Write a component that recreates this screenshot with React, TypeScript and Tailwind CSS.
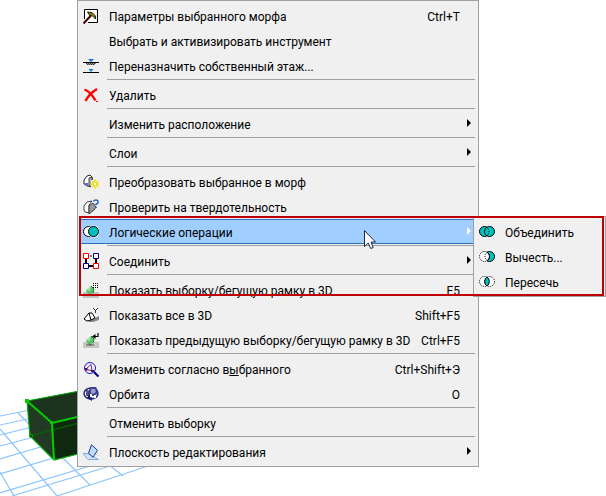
import type { ReactNode } from 'react'
import { clsx } from 'clsx'

interface Item {
  label: ReactNode
  icon?: ReactNode
  shortcut?: string
  active?: boolean
  submenu?: boolean
}

function Glyph({ children }: { children: ReactNode }) {
  return (
    <svg viewBox="0 0 16 16" className="h-4 w-4" fill="none" aria-hidden="true">
      {children}
    </svg>
  )
}

// ── Icons ───────────────────────────────────────────────────
const SettingsIcon = (
  <Glyph>
    <path d="M1.500 11V1.500h13v13H5" fill="#fff" stroke="#000" />
    <path d="M4.500 4l4.500.5L12.500 8v3L9 7.500 7 8z" fill="#808000" stroke="#000" strokeWidth=".8" />
    <path d="M.5 15.500L8 7.500" stroke="#400000" strokeWidth="2" />
  </Glyph>
)

const StoryIcon = (
  <Glyph>
    <path d="M0 4.500h16M0 14.500h16" stroke="#000" />
    <path d="M3 5h10v1H3zM4 6h8v1H4z" fill="#909090" />
    <path d="M3 5.500h10M4 6.500h8" stroke="#444" strokeDasharray="1 1" />
    <path d="M5 1h6L8 4zM5.500 11h5L8 14z" fill="#1478e0" />
  </Glyph>
)

const DeleteIcon = (
  <Glyph>
    <path d="M1.500 2.500C5 4 10 9 12.500 13.500M14 2C9 5 5 9 2.500 14" stroke="#f00" strokeWidth="2.400" />
    <path d="M13 14.500h2" stroke="#f00" />
  </Glyph>
)

const ConvertIcon = (
  <Glyph>
    <path d="M1 6l3-4 3-1 2 2v10l-4-1-4-2z" fill="#fff" stroke="#222" />
    <path d="M6 4l3-1v10l-3-1z" fill="#b0b0b0" stroke="#222" strokeWidth=".8" />
    <path d="M1.500 9H5v4l-3.500-2z" fill="#6a6ab8" />
    <path d="M8 6h8v8H8z" fill="#f0f0f0" />
    <path d="M12 5v10M7.500 10H16M9 7l6 6M15 7l-6 6" stroke="#f0dc00" strokeWidth="1.300" />
    <path d="M11 9h2v2h-2z" fill="#fff" />
  </Glyph>
)

const CheckIcon = (
  <Glyph>
    <path d="M1 7l3-4 5-1-3 4v8l-4-1-1-2z" fill="#fff" stroke="#333" strokeWidth=".9" />
    <path d="M6 7l4-3 3 4-2 3-5 4z" fill="#989898" stroke="#333" strokeWidth=".9" />
    <path d="M10.500 2.500Q11 1 13 1t2 2-2 2.200V6M13 7.500V9" stroke="#2464c8" strokeWidth="1.500" />
  </Glyph>
)

const BooleanIcon = (
  <Glyph>
    <circle cx="5.500" cy="7.500" r="5" fill="#fff" stroke="#000" />
    <circle cx="10.500" cy="7.500" r="6" fill="#fff" />
    <circle cx="10.500" cy="7.500" r="5" fill="#00c0c0" stroke="#000" />
  </Glyph>
)

const ConnectIcon = (
  <Glyph>
    <path d="M3 3h10v10H3z" stroke="#000" strokeWidth="2" />
    <path d="M5.500 3h5" stroke="#f0f0f0" strokeWidth="2" strokeDasharray="2 1" />
    <path d="M.5.5h5v5h-5zM10.500 10.500h5v5h-5z" fill="#fff" stroke="#f00" />
    <path d="M10.500.5h5v5h-5zM.5 10.500h5v5h-5z" fill="#fff" stroke="#000080" />
  </Glyph>
)

const GreenSolid = (
  <>
    <path d="M3 8l5-4 3 3-1 4-4 2-2-2z" fill="#5cc26a" />
    <path d="M3 8l5-4-1 5z" fill="#a4e6a8" />
    <path d="M8 4l3 3-1 4" stroke="#267a34" />
    <path d="M6 12l2 1" stroke="#1c5c24" />
  </>
)

const ShowSelectionIcon = (
  <Glyph>
    <path d="M0 10h16v6H0z" fill="#c2c2c0" />
    <path d="M3 12h8v2H3z" fill="#8c8c8c" />
    {GreenSolid}
    <path d="M10 1.500h6M10 3.500h6M10 5.500h6" stroke="#000" strokeDasharray="1 1" />
  </Glyph>
)

const ShowAllIcon = (
  <Glyph>
    <path d="M10 12l6-3v4l-6 2H5z" fill="#888" />
    <path d="M1 12l5-6 2 7-4 1zM6 6h3l3 5-4 2" fill="#fff" stroke="#000" />
    <path d="M10 1l2.500 2.500L15 1M12.500 3v3" stroke="#333" />
  </Glyph>
)

const ShowPreviousIcon = (
  <Glyph>
    <path d="M0 10h16v6H0z" fill="#c8c8c0" />
    <path d="M3 12h8v2H3z" fill="#8c8c8c" />
    {GreenSolid}
    <path d="M15 1v3.500h-4" stroke="#000" strokeWidth="1.200" />
    <path d="M9 4.500L12.500 2v5z" fill="#000" />
  </Glyph>
)

const ZoomIcon = (
  <Glyph>
    <circle cx="7" cy="7" r="5.500" fill="#f4f4ff" stroke="#1414d0" />
    <path d="M2.500 8.500L8 3.500l1 6z" stroke="#702080" />
    <path d="M2 7h2.500v2.500H2zM8 9h3v2H8z" fill="#501058" />
    <path d="M11 11l4.500 4.500" stroke="#000080" strokeWidth="2.200" />
  </Glyph>
)

const OrbitIcon = (
  <Glyph>
    <ellipse cx="8" cy="7.500" rx="7" ry="5.500" fill="#fff" stroke="#202074" strokeWidth="1.400" />
    <path d="M5 5l3-4h5l2 4-2 5H8L5 9z" fill="#40408c" />
    <path d="M8 3h4l1 3-3 2-2-1z" fill="#9c9ccc" />
    <path d="M4 4v5l3 2v2M7 9l-2 3" stroke="#101054" strokeWidth="1.400" />
    <path d="M7 8h2v3H7zM11 9h2v3h-2z" fill="#fff" />
    <path d="M5 12.500l4-1.500v4z" fill="#202074" />
  </Glyph>
)

const PlaneIcon = (
  <Glyph>
    <path d="M0 9.500h5l10.500 6H5z" fill="#cfe4fc" stroke="#80ace4" />
    <path d="M8.500.8l6 5.500-4.500 7-4.500-4z" fill="#c0dcfc" stroke="#1c3c84" />
  </Glyph>
)

// ── Boolean operation icons: overlapping circles ────────────
const UnionIcon = (
  <Glyph>
    <circle cx="5.500" cy="7.500" r="5" fill="#00c4c0" stroke="#000" />
    <circle cx="10.500" cy="7.500" r="5" fill="#00c4c0" stroke="#000" />
    <path d="M8 3.500a5 5 0 0 1 0 8" stroke="#000" strokeDasharray="1 1" />
  </Glyph>
)

const SubtractIcon = (
  <Glyph>
    <circle cx="10.500" cy="7.500" r="5" fill="#00c4c0" stroke="#000" />
    <path d="M8 3a5.500 5.500 0 0 1 0 9 5.500 5.500 0 0 1 0-9z" fill="#fff" stroke="#000" />
    <circle cx="5.500" cy="7.500" r="5" fill="#fff" stroke="#000" strokeDasharray="1 1" />
    <path d="M8 3.200a5 5 0 0 1 0 8.600" stroke="#000" />
    <path d="M8 3.500a5 5 0 0 0 0 8" stroke="#000" strokeDasharray="1 1" />
  </Glyph>
)

const IntersectIcon = (
  <Glyph>
    <circle cx="5.500" cy="7.500" r="5" fill="#fff" stroke="#000" strokeDasharray="1 1" />
    <circle cx="10.500" cy="7.500" r="5" fill="#fff" stroke="#000" strokeDasharray="1 1" />
    <path d="M8 3a5.500 5.500 0 0 1 0 9 5.500 5.500 0 0 1 0-9z" fill="#00c4c0" stroke="#000" />
  </Glyph>
)

// Groups are divided by a rule
const GROUPS: Item[][] = [
  [
    { label: 'Параметры выбранного морфа', icon: SettingsIcon, shortcut: 'Ctrl+T' },
    { label: 'Выбрать и активизировать инструмент' },
    { label: 'Переназначить собственный этаж...', icon: StoryIcon },
  ],
  [{ label: 'Удалить', icon: DeleteIcon }],
  [{ label: 'Изменить расположение', submenu: true }],
  [{ label: 'Слои', submenu: true }],
  [
    { label: 'Преобразовать выбранное в морф', icon: ConvertIcon },
    { label: 'Проверить на твердотельность', icon: CheckIcon },
    { label: 'Логические операции', icon: BooleanIcon, submenu: true, active: true },
  ],
  [{ label: 'Соединить', icon: ConnectIcon, submenu: true }],
  [
    { label: 'Показать выборку/бегущую рамку в 3D', icon: ShowSelectionIcon, shortcut: 'F5' },
    { label: 'Показать все в 3D', icon: ShowAllIcon, shortcut: 'Shift+F5' },
    { label: 'Показать предыдущую выборку/бегущую рамку в 3D', icon: ShowPreviousIcon, shortcut: 'Ctrl+F5' },
  ],
  [
    { label: <>Изменить согласно в<u>ы</u>бранного</>, icon: ZoomIcon, shortcut: 'Ctrl+Shift+Э' },
    { label: 'Орбита', icon: OrbitIcon, shortcut: 'O' },
  ],
  [{ label: 'Отменить выборку' }],
  [{ label: 'Плоскость редактирования', icon: PlaneIcon, submenu: true }],
]

const BOOLEAN_ITEMS: Item[] = [
  { label: 'Объединить', icon: UnionIcon },
  { label: 'Вычесть...', icon: SubtractIcon },
  { label: 'Пересечь', icon: IntersectIcon },
]

function MenuRow({ item }: { item: Item }) {
  return (
    <button
      type="button"
      role="menuitem"
      aria-haspopup={item.submenu ? 'menu' : undefined}
      className={clsx(
        'flex h-[25px] w-full items-center border-y pl-1 text-left whitespace-nowrap',
        item.active ? 'border-[#2a6fb8] bg-[#a0cfff]' : 'border-transparent'
      )}
    >
      <span className="w-[26px] shrink-0">{item.icon}</span>
      <span className="flex-1 pt-0.5">{item.label}</span>
      {item.shortcut && <span className="pt-0.5 pr-[18px]">{item.shortcut}</span>}
      {item.submenu && (
        <svg viewBox="0 0 4 8" className={clsx('mr-[7px] mb-0.5 h-2 w-1', item.active ? 'fill-white' : 'fill-black')} aria-hidden="true">
          <path d="M0 0l4 4-4 4z" />
        </svg>
      )}
    </button>
  )
}

function BooleanSubmenu() {
  return (
    <div
      role="menu"
      aria-label="Логические операции"
      className="absolute -top-[3px] left-[394px] w-[133px] border border-[#a0a0a0] bg-[#f0f0f0] py-[2px] pl-px"
    >
      {BOOLEAN_ITEMS.map((item, i) => (
        <MenuRow key={i} item={item} />
      ))}
    </div>
  )
}

function Cursor() {
  return (
    <svg viewBox="0 0 12 19" className="absolute top-[11px] left-[285px] h-[19px] w-3" aria-hidden="true">
      <path d="M.5.5v16l3.700-3.500 2.500 5.500 2.500-1L7 12h4.500z" fill="#fff" stroke="#1c2440" />
    </svg>
  )
}

// 3D view behind the menu: ground grid and the selected box
function Scene() {
  return (
    <svg viewBox="0 0 160 110" className="absolute bottom-0 left-0 h-[110px] w-[160px]" aria-hidden="true">
      <g stroke="#8cc4ff" strokeWidth="1.200">
        <path d="M0 30l30-6M0 39l32-7M0 49l32-8M0 60l34-9M0 73l44-13M0 88l77-23M0 107l110-33M12 110l98-30M57 110l94-31" />
        <path d="M0 43l57 67M0 86l14 24M18 27l60 60 12 12M108 78l15 12" />
      </g>
      <path d="M27 15L90 3v62L54 74 30 50z" fill="#102810" />
      <path d="M27 15L90 3v25L52 37z" fill="#1c331e" />
      <path d="M27 15l25 22 2 37-24-24z" fill="#223a24" />
      <path d="M30 50l60-16" stroke="#085c08" strokeWidth="1.500" />
      <path d="M27 15L90 3M27 15l3 35 24 24 36-9" fill="none" stroke="#08a80c" strokeWidth="1.200" />
      <path d="M27 15l25 22 38-9M52 37l2 37" fill="none" stroke="#00d000" strokeWidth="2" />
      <path d="M25 13h4v4h-4zM50 35h3v3h-3z" fill="#00d000" />
      <circle cx="31" cy="50" r="1.500" fill="#002800" stroke="#00b000" />
    </svg>
  )
}

export default function App() {
  return (
    <main className="relative min-h-screen overflow-hidden bg-white font-[Roboto,'Noto_Sans',sans-serif] text-[12px] leading-4 text-black">
      <Scene />
      <div
        role="menu"
        className="relative ml-[77px] w-[402px] border border-[#a0a0a0] bg-[#f0f0f0] py-[2px] pl-px"
      >
        {GROUPS.map((group, g) => (
          <div key={g}>
            {g > 0 && <hr className="mt-px mr-[3px] mb-[2px] ml-7 border-t border-[#a0a0a0]" />}
            {group.map((item, i) =>
              item.active ? (
                <div key={i} className="relative">
                  <MenuRow item={item} />
                  <Cursor />
                  <BooleanSubmenu />
                  <div className="pointer-events-none absolute -top-[3px] left-0 h-20 w-[525px] border-2 border-[#c00000]" />
                </div>
              ) : (
                <MenuRow key={i} item={item} />
              )
            )}
          </div>
        ))}
      </div>
    </main>
  )
}
